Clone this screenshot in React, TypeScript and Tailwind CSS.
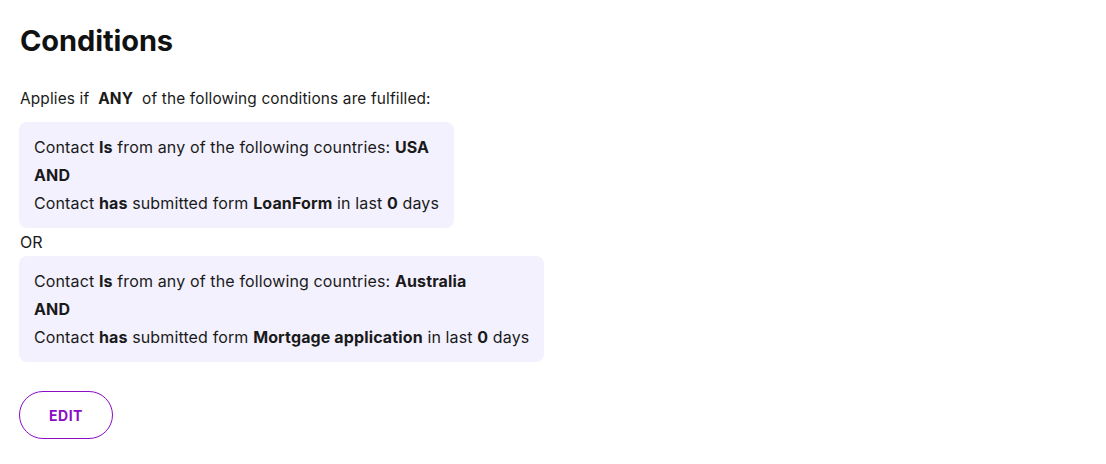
import React from "react";

const B = ({ children }: { children: React.ReactNode }) => (
  <span className="font-bold">{children}</span>
);

export default function App() {
  return (
    <div
      className="min-h-[464px] bg-white px-[20px] pt-[23px] text-[#1a1a1a]"
      style={{ fontFamily: "Inter, 'Noto Sans', sans-serif" }}
    >
      <h1 className="text-[29px] font-bold leading-[36px] tracking-[-0.1px] text-[#111]">Conditions</h1>
      <p className="mt-[28px] text-[15.4px] leading-[24px] tracking-[0.15px]">
        Applies if&nbsp; <B>ANY</B> &nbsp;of the following conditions are fulfilled:
      </p>
      <div className="mt-[11px] flex flex-col items-start text-[16px] leading-[28px] tracking-[0.13px]">
        <div className="-ml-px rounded-[8px] bg-[#f3f1fe] px-[15px] py-[11px]">
          <div>
            Contact <B>Is</B> from any of the following countries: <B>USA</B>
          </div>
          <div className="font-bold">AND</div>
          <div>
            Contact <B>has</B> submitted form <B>LoanForm</B> in last <B>0</B> days
          </div>
        </div>
        <div>OR</div>
        <div className="-ml-px rounded-[8px] bg-[#f3f1fe] px-[15px] py-[11px]">
          <div>
            Contact <B>Is</B> from any of the following countries: <B>Australia</B>
          </div>
          <div className="font-bold">AND</div>
          <div>
            Contact <B>has</B> submitted form <B>Mortgage application</B> in last <B>0</B> days
          </div>
        </div>
      </div>
      <button className="mt-[29px] -ml-px h-[48px] w-[94px] rounded-full border border-[#8a0cc6] text-[14px] font-bold tracking-[0.5px] text-[#8a0cc6]">
        EDIT
      </button>
    </div>
  );
}
